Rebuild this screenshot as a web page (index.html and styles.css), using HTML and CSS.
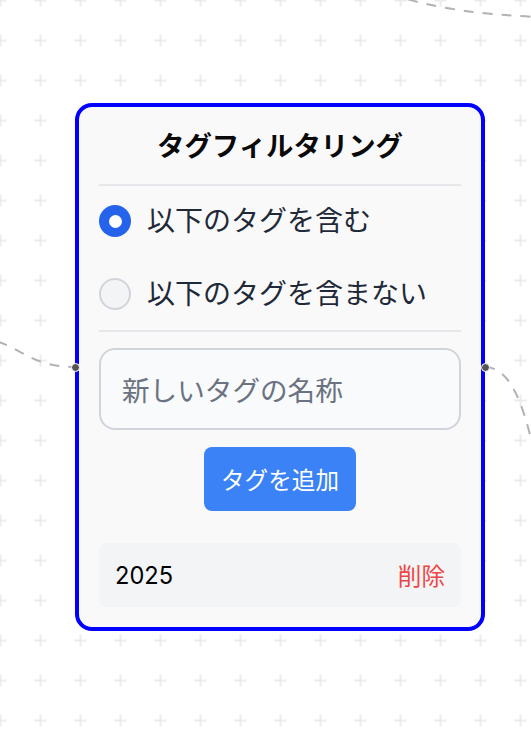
FILE: index.html
```html
<!DOCTYPE html>
<html lang="ja">
<head>
<meta charset="utf-8">
<title>タグフィルタリング</title>
<link rel="stylesheet" href="styles.css">
</head>
<body>
<div class="canvas">
  <svg class="backdrop" width="531" height="733" viewBox="0 0 531 733">
    <defs>
      <pattern id="cross" patternUnits="userSpaceOnUse" x="-19.5" y="-19.5" width="40" height="40">
        <path d="M14 20 H26 M20 14 V26" stroke="#ebebeb" stroke-width="2" fill="none"/>
      </pattern>
    </defs>
    <rect width="531" height="733" fill="url(#cross)"/>
    <g class="edges">
      <path d="M390 -6 Q450 14 540 17"/>
      <path d="M-40 336 C20 336 20 367 75 367"/>
      <path d="M485 367 C515 367 528 420 540 480"/>
    </g>
  </svg>

  <div class="node">
    <span class="handle handle-left"></span>
    <span class="handle handle-right"></span>

    <h2 class="title">タグフィルタリング</h2>
    <hr class="divider divider-top">

    <div class="options">
      <label class="option">
        <span class="radio radio-on"><span class="radio-dot"></span></span>
        <span class="option-text">以下のタグを含む</span>
      </label>
      <label class="option">
        <span class="radio radio-off"></span>
        <span class="option-text">以下のタグを含まない</span>
      </label>
    </div>

    <hr class="divider divider-bottom">

    <div class="field">
      <span class="placeholder">新しいタグの名称</span>
    </div>

    <div class="actions">
      <button class="add-btn" type="button">タグを追加</button>
    </div>

    <div class="tag-row">
      <span class="tag-name">2025</span>
      <span class="tag-delete">削除</span>
    </div>
  </div>
</div>
</body>
</html>
```

FILE: styles.css
```css
html, body {
  margin: 0;
  padding: 0;
  background: #ffffff;
}

body {
  width: 531px;
  height: 733px;
  overflow: hidden;
  font-family: "Inter", "Noto Sans CJK JP", sans-serif;
}

.canvas {
  position: relative;
  width: 531px;
  height: 733px;
  overflow: hidden;
}

.backdrop {
  position: absolute;
  left: 0;
  top: 0;
  display: block;
}

.edges path {
  fill: none;
  stroke: #b1b1b7;
  stroke-width: 2;
  stroke-dasharray: 10 9;
}

.node {
  position: absolute;
  left: 75px;
  top: 103px;
  width: 410px;
  box-sizing: border-box;
  border: 4px solid #0000ff;
  border-radius: 17px;
  background: #f9f9fa;
  padding: 20px;
  display: flex;
  flex-direction: column;
}

.handle {
  position: absolute;
  top: 255.5px;
  width: 7px;
  height: 7px;
  border-radius: 50%;
  background: #555555;
  border: 1px solid #ffffff;
}

.handle-left {
  left: -8.5px;
}

.handle-right {
  right: -8.5px;
}

.title {
  margin: 0;
  font-size: 27.4px;
  line-height: 38px;
  font-weight: 700;
  text-align: center;
  color: #0a0a0a;
}

.divider {
  margin: 0;
  border: 0;
  height: 2px;
  background: #e5e7eb;
}

.divider-top {
  margin-top: 19px;
}

.options {
  margin-top: 19px;
  display: flex;
  flex-direction: column;
  gap: 41px;
}

.option {
  display: flex;
  align-items: center;
  gap: 16px;
  height: 32px;
}

.radio {
  width: 32px;
  height: 32px;
  box-sizing: border-box;
  border-radius: 50%;
  flex: none;
  display: flex;
  align-items: center;
  justify-content: center;
}

.radio-on {
  background: #2563eb;
}

.radio-dot {
  width: 13px;
  height: 13px;
  border-radius: 50%;
  background: #ffffff;
}

.radio-off {
  background: #f3f4f6;
  border: 2px solid #d1d5db;
}

.option-text {
  font-size: 28px;
  line-height: 32px;
  color: #1f2937;
}

.divider-bottom {
  margin-top: 20px;
}

.field {
  margin-top: 16px;
  height: 82px;
  box-sizing: border-box;
  border: 2px solid #d1d5db;
  border-radius: 16px;
  background: #f9fafb;
  padding: 0 21px;
  display: flex;
  align-items: center;
}

.placeholder {
  font-size: 27.6px;
  color: #6b7280;
}

.actions {
  margin-top: 17px;
  display: flex;
  justify-content: center;
}

.add-btn {
  width: 152px;
  height: 64px;
  border: 0;
  border-radius: 8px;
  background: #3b82f6;
  color: #ffffff;
  font-family: inherit;
  font-size: 23.6px;
  padding: 0;
}

.tag-row {
  margin-top: 32px;
  height: 64px;
  box-sizing: border-box;
  border-radius: 8px;
  background: #f3f4f6;
  padding: 0 16px 0 16px;
  display: flex;
  align-items: center;
  justify-content: space-between;
}

.tag-name {
  font-size: 23.6px;
  color: #000000;
}

.tag-delete {
  font-size: 23.6px;
  color: #ef4444;
}
```
